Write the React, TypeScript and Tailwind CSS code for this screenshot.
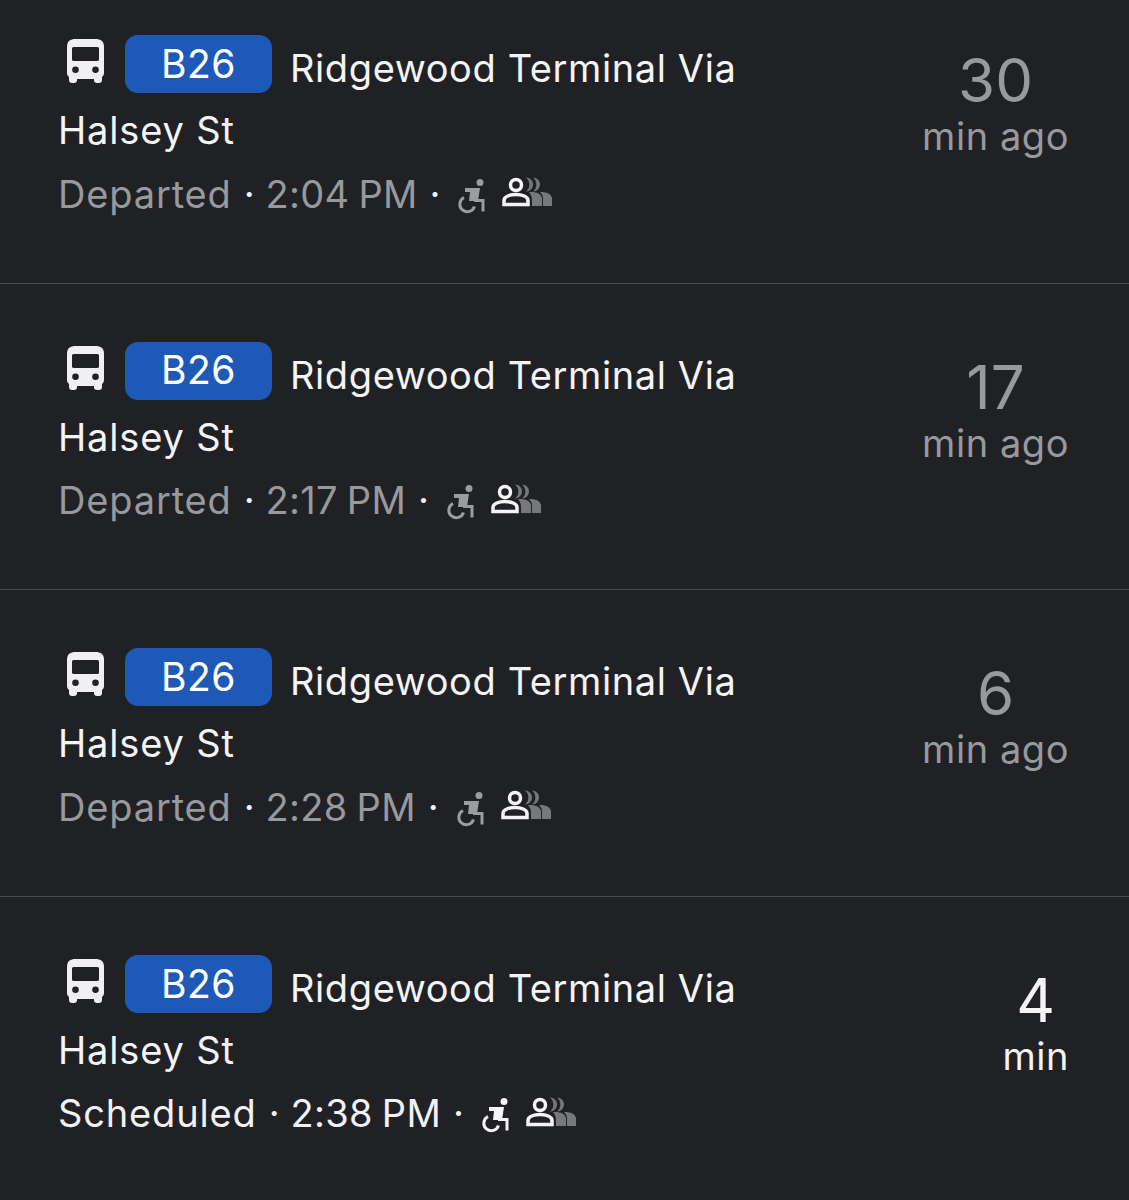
const font = { fontFamily: '"Inter", "Noto Sans", sans-serif' }

type Trip = {
  status: string
  clock: string
  value: string
  unit: string
  live?: boolean
}

const trips: Trip[] = [
  { status: 'Departed', clock: '2:04', value: '30', unit: 'min ago' },
  { status: 'Departed', clock: '2:17', value: '17', unit: 'min ago' },
  { status: 'Departed', clock: '2:28', value: '6', unit: 'min ago' },
  { status: 'Scheduled', clock: '2:38', value: '4', unit: 'min', live: true },
]

function BusIcon() {
  return (
    <svg viewBox="0 0 37 44" className="w-[37px] h-[44px] shrink-0" fill="#f0f0f2">
      <path
        fillRule="evenodd"
        d="M9 0h19c6 0 9 2 9 8v26c0 2-1 3-2 4v3c0 2-1 3-3 3h-2c-2 0-3-1-3-3v-1H10v1c0 2-1 3-3 3H5c-2 0-3-1-3-3v-3c-1-1-2-2-2-4V8C0 2 3 0 9 0zM5 10v10c0 1 0 2 2 2h23c2 0 2-1 2-2V10c0-1 0-2-2-2H7C5 8 5 9 5 10zM8.500 27.500a3.300 3.300 0 1 0 0 6.600a3.300 3.300 0 1 0 0-6.600zM28.500 27.500a3.300 3.300 0 1 0 0 6.600a3.300 3.300 0 1 0 0-6.600z"
      />
    </svg>
  )
}

function WheelchairIcon({ live }: { live?: boolean }) {
  const color = live ? '#f4f4f5' : '#9b9ca0'
  return (
    <svg viewBox="0 0 28 35" className="w-[28px] h-[35px] shrink-0" fill="none" stroke={color}>
      <circle cx="23" cy="3.500" r="3.500" fill={color} stroke="none" />
      <path d="M8 9h15l-2 13h-9l1-9h-5z" fill={color} stroke="none" />
      <path d="M17 21.500h9v11" strokeWidth="3" />
      <path d="M7 18.500a7.500 7.500 0 1 0 10.500 9" strokeWidth="3" />
    </svg>
  )
}

function PeopleIcon() {
  return (
    <svg viewBox="0 0 50 30" className="w-[50px] h-[30px] shrink-0">
      <g fill="#77787c">
        <path d="M24 0.500a7 7 0 0 1 0 14a9 9 0 0 0 0-14z" />
        <path d="M31 0.500a7 7 0 0 1 0 14a9 9 0 0 0 0-14z" />
        <path d="M29 15c6 0 10 2 11 6v8h-10v-6c0-3-1-6-3-8z" />
        <path d="M39 15c6 0 10 2 11 6v8h-9v-8c0-2-1-4-3-6z" />
      </g>
      <g fill="none" stroke="#f4f4f5" strokeWidth="3.500">
        <circle cx="14" cy="8" r="5.500" />
        <path d="M2 27.500v-4c0-4 6-6 12-6s12 2 12 6v4z" />
      </g>
    </svg>
  )
}

function TripRow({ trip, first, last }: { trip: Trip; first: boolean; last: boolean }) {
  const statusColor = trip.live ? 'text-[#f2f2f4]' : 'text-[#98999d]'
  return (
    <div
      className={`shrink-0 flex justify-between pl-[58px] pr-[60px] ${first ? 'pt-[35px] h-[283.67px]' : 'pt-[58px] h-[306.67px]'} ${last ? '' : 'border-b border-[#4a4b4f]'}`}
    >
      <div className="flex flex-col">
        <div className="flex items-start h-[58px]">
          <div className="ml-[9px] mt-[4px] mr-[1px]">
            <BusIcon />
          </div>
          <div className="ml-[20px] w-[147px] h-[58px] rounded-[13px] bg-[#1e59b8] flex items-center justify-center text-[39px] tracking-[0.5px] text-white">
            B26
          </div>
          <div className="ml-[18px] mt-[8px] text-[38px] leading-[50px] tracking-[0.6px] text-[#f4f4f5] whitespace-nowrap">
            Ridgewood Terminal Via
          </div>
        </div>
        <div className="mt-[12px] text-[38px] leading-[50px] tracking-[0.85px] text-[#f4f4f5]">Halsey St</div>
        <div className={`mt-[14px] flex items-center h-[50px] text-[38px] tracking-[0.85px] ${statusColor}`}>
          <span>{trip.status}</span>
          <span className="text-[#f2f2f4] ml-[12px] mr-[10px]">·</span>
          <span className="tracking-[0.3px]">{trip.clock}</span>
          <span className="ml-[9px] tracking-[0.3px]">PM</span>
          <span className="text-[#f2f2f4] ml-[12px]">·</span>
          <span className="mt-[4px] ml-[16px]">
            <WheelchairIcon live={trip.live} />
          </span>
          <span className="-mt-[4px] ml-[17px]">
            <PeopleIcon />
          </span>
        </div>
      </div>
      <div className={`flex flex-col items-center ${trip.live ? 'text-[#f4f4f5]' : 'text-[#98999d]'}`}>
        <div className="mt-[10px] text-[60px] leading-[70px]">{trip.value}</div>
        <div className="text-[38px] leading-[42px] tracking-[0.55px]">{trip.unit}</div>
      </div>
    </div>
  )
}

export default function App() {
  return (
    <div className="w-[1129px] h-[1200px] overflow-hidden bg-[#202125] flex flex-col" style={font}>
      {trips.map((trip, index) => (
        <TripRow key={index} trip={trip} first={index === 0} last={index === trips.length - 1} />
      ))}
    </div>
  )
}
